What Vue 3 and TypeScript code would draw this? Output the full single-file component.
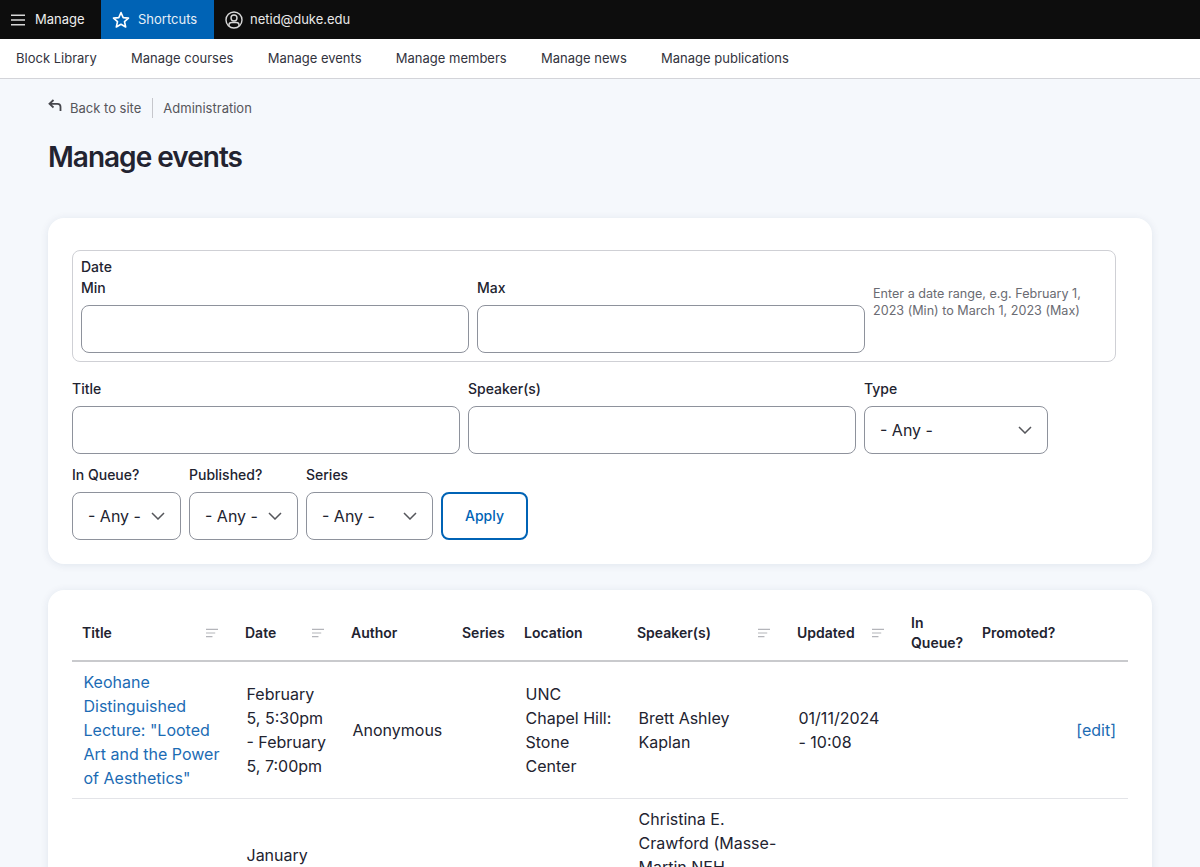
<script setup lang="ts">
const links: string[] = ['Block Library', 'Manage courses', 'Manage events', 'Manage members', 'Manage news', 'Manage publications']
interface Col { label: string; width: number; sort: boolean }
const cols: Col[] = [
  { label: 'Title', width: 163, sort: true },
  { label: 'Date', width: 106, sort: true },
  { label: 'Author', width: 111, sort: false },
  { label: 'Series', width: 62, sort: false },
  { label: 'Location', width: 113, sort: false },
  { label: 'Speaker(s)', width: 160, sort: true },
  { label: 'Updated', width: 114, sort: true },
  { label: 'In Queue?', width: 71, sort: false },
  { label: 'Promoted?', width: 90, sort: false },
  { label: '', width: 66, sort: false },
]
</script>

<template>
  <div class="page">
    <header class="topbar">
      <a class="tb tb-manage">
        <svg width="16" height="16" viewBox="0 0 16 16" fill="none" stroke="#d8d8d8" stroke-width="1.5"><path d="M1 3.2h14M1 8h14M1 12.8h14" /></svg>
        <span>Manage</span>
      </a>
      <a class="tb tb-short">
        <svg width="18" height="18" viewBox="0 0 18 18" fill="none" stroke="#fff" stroke-width="1.6" stroke-linejoin="round"><path d="M9 1.6l2.2 5 5.3.5-4 3.6 1.2 5.3L9 13.2l-4.7 2.8 1.2-5.3-4-3.6 5.3-.5z" /></svg>
        <span>Shortcuts</span>
      </a>
      <a class="tb tb-user">
        <svg width="18" height="18" viewBox="0 0 18 18" fill="none" stroke="#d8d8d8" stroke-width="1.4"><circle cx="9" cy="9" r="8" /><circle cx="9" cy="7" r="3" /><path d="M4 15v-1.2c0-1.4 1.2-2.3 2.6-2.3h4.800c1.400 0 2.600.9 2.600 2.300V15" /></svg>
        <span>netid@duke.edu</span>
      </a>
    </header>
    <nav class="subbar">
      <a v-for="l in links" :key="l">{{ l }}</a>
    </nav>

    <main class="content">
      <div class="crumbs">
        <svg class="back" width="14" height="12" viewBox="0 0 14 12" fill="none" stroke="#46474d" stroke-width="1.8"><path d="M5.500 1L1.500 4.800l4 3.700M1.500 4.800h8c1.800 0 3 1.200 3 3V12" /></svg>
        <span class="back-text">Back to site</span>
        <span class="sep"></span>
        <span>Administration</span>
      </div>
      <h1>Manage events</h1>

      <section class="card form-card">
        <div class="fieldset">
          <div class="legend">Date</div>
          <div class="row">
            <div class="field w388"><label>Min</label><input type="text" /></div>
            <div class="field w388"><label>Max</label><input type="text" /></div>
            <p class="hint">Enter a date range, e.g. February 1, 2023 (Min) to March 1, 2023 (Max)</p>
          </div>
        </div>
        <div class="row row2">
          <div class="field w388"><label>Title</label><input type="text" /></div>
          <div class="field w388"><label>Speaker(s)</label><input type="text" /></div>
          <div class="field w184">
            <label>Type</label>
            <div class="sel"><select><option>- Any -</option></select><svg class="chev" width="14" height="8" viewBox="0 0 14 8" fill="none" stroke="#55565b" stroke-width="1.500"><path d="M1 1l6 6 6-6" /></svg></div>
          </div>
        </div>
        <div class="row row3">
          <div class="field w109">
            <label>In Queue?</label>
            <div class="sel"><select><option>- Any -</option></select><svg class="chev" width="14" height="8" viewBox="0 0 14 8" fill="none" stroke="#55565b" stroke-width="1.500"><path d="M1 1l6 6 6-6" /></svg></div>
          </div>
          <div class="field w109">
            <label>Published?</label>
            <div class="sel"><select><option>- Any -</option></select><svg class="chev" width="14" height="8" viewBox="0 0 14 8" fill="none" stroke="#55565b" stroke-width="1.500"><path d="M1 1l6 6 6-6" /></svg></div>
          </div>
          <div class="field w127">
            <label>Series</label>
            <div class="sel"><select><option>- Any -</option></select><svg class="chev" width="14" height="8" viewBox="0 0 14 8" fill="none" stroke="#55565b" stroke-width="1.500"><path d="M1 1l6 6 6-6" /></svg></div>
          </div>
          <button class="apply" type="button">Apply</button>
        </div>
      </section>

      <section class="card table-card">
        <table>
          <colgroup>
            <col v-for="(c, i) in cols" :key="i" :style="{ width: c.width + 'px' }" />
          </colgroup>
          <thead>
            <tr>
              <th v-for="(c, i) in cols" :key="i">
                <div class="th-in">
                  <span>{{ c.label }}</span>
                  <svg v-if="c.sort" width="13" height="10" viewBox="0 0 13 10" fill="none" stroke="#b4b5ba" stroke-width="1.300"><path d="M0 1h13M0 5h10M0 9h7" /></svg>
                </div>
              </th>
            </tr>
          </thead>
          <tbody>
            <tr>
              <td><a>Keohane Distinguished Lecture: "Looted Art and the Power of Aesthetics"</a></td>
              <td>February 5, 5:30pm - February 5, 7:00pm</td>
              <td>Anonymous</td>
              <td></td>
              <td>UNC Chapel Hill: Stone Center</td>
              <td>Brett Ashley Kaplan</td>
              <td>01/11/2024 - 10:08</td>
              <td></td>
              <td></td>
              <td class="edit"><a>[edit]</a></td>
            </tr>
            <tr class="tall">
              <td></td>
              <td>January</td>
              <td></td>
              <td></td>
              <td></td>
              <td class="speaker">Christina E. Crawford (Masse-Martin NEH</td>
              <td></td>
              <td></td>
              <td></td>
              <td></td>
            </tr>
          </tbody>
        </table>
      </section>
    </main>
  </div>
</template>

<style scoped>
.page {
  height: 867px;
  overflow: hidden;
  background: #f5f8fc;
  font-family: Inter, "Liberation Sans", sans-serif;
  color: #222330;
}
.topbar {
  display: flex;
  height: 39px;
  background: #0d0d0d;
  color: #fff;
  font-size: 13px;
}
.tb {
  display: flex;
  align-items: center;
  gap: 9px;
  padding-bottom: 1px;
  box-sizing: border-box;
}
.tb-manage { width: 101px; padding-left: 10px; color: #eee; }
.tb-short { width: 113px; padding-left: 11px; background: #0063b5; gap: 8px; color: #e6eff7; }
.tb-user { padding-left: 11px; gap: 7px; color: #e8e8e8; }
.tb svg { margin-top: 1px; }
.subbar {
  display: flex;
  align-items: center;
  gap: 34.300px;
  height: 39px;
  padding-left: 16px;
  background: #fff;
  border-bottom: 1px solid #d3d4d9;
  font-size: 13px;
  color: #32333d;
}
.subbar a { margin-top: -2px; }
.content { padding: 0 48px; }
.crumbs {
  display: flex;
  align-items: center;
  height: 20px;
  margin-top: 19px;
  font-size: 13px;
  color: #55565b;
}
.back { margin-top: -6px; }
.back-text { margin-left: 8px; }
.sep { width: 1px; height: 20px; background: #c6c7cc; margin: 0 10.500px; }
h1 {
  margin: 21px 0 0;
  height: 36px;
  font-size: 28px;
  line-height: 36px;
  font-weight: 560;
  letter-spacing: -1px;
  color: #222330;
}
.card {
  background: #fff;
  border-radius: 16px;
  box-shadow: 0 1px 8px rgba(0, 40, 90, 0.09);
}
.form-card { margin-top: 43px; padding: 32px 24px 0; height: 314px; }
.fieldset {
  width: 1044px;
  height: 112px;
  box-sizing: border-box;
  border: 1px solid #cfd0d5;
  border-radius: 8px;
  padding: 7px 8px 8px;
}
.legend { font-size: 14px; font-weight: 500; line-height: 17px; margin-bottom: 1px; }
.row { display: flex; gap: 8px; align-items: flex-start; }
.field { display: flex; flex-direction: column; }
.field label { display: block; font-size: 14px; font-weight: 500; line-height: 17px; margin: 3px 0 9px; }
.w388 { width: 388px; }
.w184 { width: 184px; }
.w109 { width: 109px; }
.w127 { width: 127px; }
input, select {
  display: block;
  box-sizing: border-box;
  width: 100%;
  height: 48px;
  border: 1px solid #8e929c;
  border-radius: 8px;
  background: #fff;
  font-family: inherit;
  font-size: 16px;
  color: #222330;
  outline: none;
}
select {
  appearance: none;
  padding: 0 0 0 15px;
}
.sel { position: relative; }
.chev { position: absolute; right: 16px; top: 20px; pointer-events: none; }
.hint {
  margin: 9px 0 0;
  width: 225px;
  font-size: 12.600px;
  line-height: 17px;
  color: #6a6b72;
}
.row2 { margin-top: 15px; }
.row3 { margin-top: 9px; align-items: flex-end; }
.apply {
  width: 87px;
  height: 48px;
  box-sizing: border-box;
  border: 2px solid #0063b5;
  border-radius: 8px;
  padding: 0 0 2px;
  background: #fff;
  color: #0063b5;
  font-family: inherit;
  font-size: 14px;
  font-weight: 500;
}
.table-card { margin-top: 26px; padding: 23px 24px 24px; height: 400px; }
table {
  width: 1056px;
  table-layout: fixed;
  border-collapse: separate;
  border-spacing: 0;
}
th {
  height: 40px;
  box-sizing: content-box;
  padding: 0 10px 7px;
  font-size: 14px;
  font-weight: 600;
  line-height: 20px;
  text-align: left;
  vertical-align: middle;
  border-bottom: 2px solid #c9cacd;
}
.th-in { display: flex; justify-content: space-between; align-items: center; }
.th-in svg { margin-right: 7px; width: 12px; }
td {
  padding: 8px 12px 8px 11.500px;
  font-size: 16px;
  line-height: 24px;
  vertical-align: middle;
  border-bottom: 1px solid #e3e4e8;
}
td a { color: #1b6bb4; }
.edit { text-align: right; }
.tall td { height: 96px; }
.tall .speaker { padding-right: 8px; vertical-align: top; }
</style>
